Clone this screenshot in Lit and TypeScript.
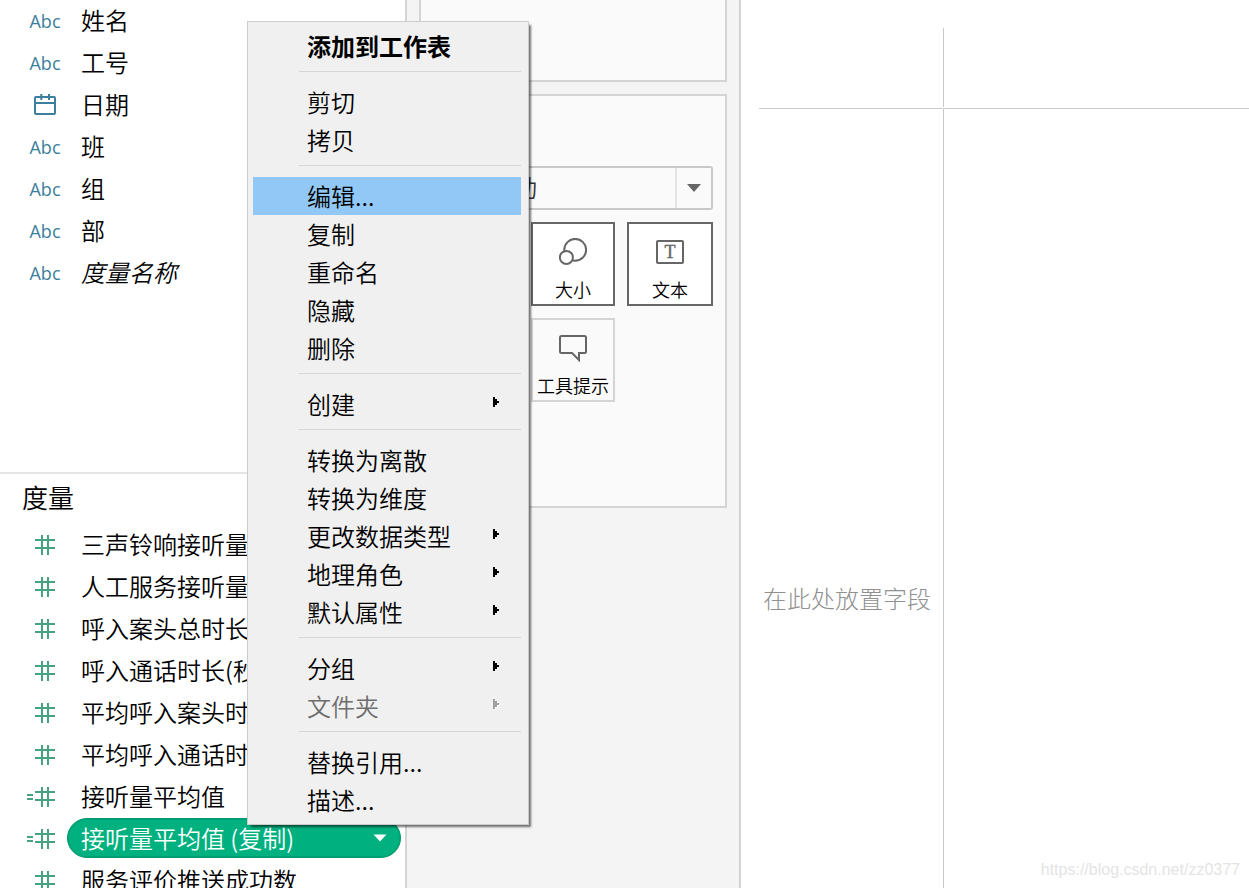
import { LitElement, html, svg, css, nothing } from "lit";
import { customElement, property } from "lit/decorators.js";
import { classMap } from "lit/directives/class-map.js";

type FieldKind = "text" | "date" | "number" | "calculated";

interface Field {
  name: string;
  kind: FieldKind;
  italic?: boolean;
  selected?: boolean;
}

interface MenuEntry {
  label: string;
  bold?: boolean;
  active?: boolean;
  submenu?: boolean;
  disabled?: boolean;
}

const DIMENSIONS: Field[] = [
  { name: "姓名", kind: "text" },
  { name: "工号", kind: "text" },
  { name: "日期", kind: "date" },
  { name: "班", kind: "text" },
  { name: "组", kind: "text" },
  { name: "部", kind: "text" },
  { name: "度量名称", kind: "text", italic: true },
];

const MEASURES: Field[] = [
  { name: "三声铃响接听量", kind: "number" },
  { name: "人工服务接听量", kind: "number" },
  { name: "呼入案头总时长", kind: "number" },
  { name: "呼入通话时长(秒)", kind: "number" },
  { name: "平均呼入案头时长", kind: "number" },
  { name: "平均呼入通话时长", kind: "number" },
  { name: "接听量平均值", kind: "calculated" },
  { name: "接听量平均值 (复制)", kind: "calculated", selected: true },
  { name: "服务评价推送成功数", kind: "number" },
];

const MENU: MenuEntry[][] = [
  [{ label: "添加到工作表", bold: true }],
  [{ label: "剪切" }, { label: "拷贝" }],
  [
    { label: "编辑...", active: true },
    { label: "复制" },
    { label: "重命名" },
    { label: "隐藏" },
    { label: "删除" },
  ],
  [{ label: "创建", submenu: true }],
  [
    { label: "转换为离散" },
    { label: "转换为维度" },
    { label: "更改数据类型", submenu: true },
    { label: "地理角色", submenu: true },
    { label: "默认属性", submenu: true },
  ],
  [
    { label: "分组", submenu: true },
    { label: "文件夹", submenu: true, disabled: true },
  ],
  [{ label: "替换引用..." }, { label: "描述..." }],
];

@customElement("field-row")
class FieldRow extends LitElement {
  @property({ attribute: false }) field!: Field;

  static styles = css`
    :host {
      display: grid;
      grid-template-columns: 42px 1fr;
      height: 42px;
      padding: 0 4px 0 25px;
      box-sizing: border-box;
    }
    .icon {
      display: flex;
      align-items: center;
      justify-content: center;
      padding-right: 2px;
      color: #3b7f9c;
    }
    .abc {
      font: 18px/24px "Open Sans", sans-serif;
    }
    .hash {
      color: #46a27f;
    }
    .name {
      display: flex;
      align-items: center;
      justify-content: space-between;
      box-sizing: border-box;
      height: 40px;
      padding-left: 14px;
      font-size: 24px;
      line-height: 36px;
      white-space: nowrap;
    }
    .italic {
      font-style: italic;
    }
    .selected {
      padding: 0 12px 0 13px;
      border: 1px solid #009a6c;
      border-radius: 20px;
      background: #00b180;
      color: #fff;
      box-shadow: inset 0 0 0 1px #00a375;
    }
    .caret {
      display: flex;
      align-items: center;
      justify-content: center;
      width: 16px;
      height: 24px;
      padding: 0;
      border: 0;
      background: none;
    }
  `;

  private icon() {
    switch (this.field.kind) {
      case "text":
        return html`<span class="icon abc">Abc</span>`;
      case "date":
        return html`<span class="icon">
          <svg width="22" height="22" viewBox="0 0 22 22" fill="none" stroke="currentColor" stroke-width="2" aria-hidden="true">
            <rect x="1" y="3" width="20" height="17" rx="1"></rect>
            <path d="M1 9H21M7.3 0V6M15 0V6"></path>
          </svg>
        </span>`;
      default:
        return html`<span class="icon hash">
          <svg width="36" height="24" viewBox="0 0 36 24" fill="none" stroke="currentColor" stroke-width="2" aria-hidden="true">
            <path d="M8 7H28M8 15H28M15 2V22M21 2V22"></path>
            ${this.field.kind === "calculated"
              ? svg`<path d="M0 10H6M0 14H6"></path>`
              : nothing}
          </svg>
        </span>`;
    }
  }

  render() {
    const { name, italic, selected } = this.field;
    return html`
      ${this.icon()}
      <span class=${classMap({ name: true, italic: !!italic, selected: !!selected })}>
        ${name}
        ${selected
          ? html`<button class="caret" aria-label="字段菜单">
              <svg width="14" height="8" viewBox="0 0 14 8" aria-hidden="true"><path d="M0.5 0.5H13.5L7 7.5Z" fill="#fff"></path></svg>
            </button>`
          : nothing}
      </span>
    `;
  }
}

@customElement("context-menu")
class ContextMenu extends LitElement {
  static styles = css`
    :host {
      display: block;
      box-sizing: border-box;
      width: 282px;
      padding: 5px 7px 5px 5px;
      border: 1px solid #ccc;
      background: #f0f0f0;
      box-shadow: 3px 3px 2px -1px rgba(0, 0, 0, 0.55);
    }
    .line {
      height: 1px;
      margin: 6px 0 11px 46px;
      border: 0;
      background: #d5d5d5;
    }
    .item {
      display: flex;
      align-items: center;
      justify-content: space-between;
      width: 100%;
      height: 38px;
      padding: 0 22px 0 54px;
      border: 0;
      background: none;
      color: #000;
      font: inherit;
      font-size: 24px;
      line-height: 36px;
      text-align: left;
      white-space: nowrap;
    }
    .bold {
      font-weight: 700;
    }
    .active {
      background: #91c8f6;
    }
    .item:disabled {
      color: #6d6d6d;
    }
    .arrow {
      margin-bottom: 4px;
      fill: #000;
    }
    .item:disabled .arrow {
      fill: #a0a0a0;
      filter: drop-shadow(1px 1px 0 #fff);
    }
  `;

  render() {
    return html`<div role="menu">
      ${MENU.map(
        (group, i) => html`
          ${i ? html`<hr class="line" />` : nothing}
          ${group.map(
            (e) => html`<button
              role="menuitem"
              class=${classMap({ item: true, bold: !!e.bold, active: !!e.active })}
              ?disabled=${!!e.disabled}
            >
              ${e.label}
              ${e.submenu
                ? html`<svg class="arrow" width="6" height="10" viewBox="0 0 6 10" aria-hidden="true">
                    <path d="M0 0H2V2H4V4H6V6H4V8H2V10H0Z"></path>
                  </svg>`
                : nothing}
            </button>`
          )}
        `
      )}
    </div>`;
  }
}

@customElement("marks-card")
class MarksCard extends LitElement {
  static styles = css`
    :host {
      display: block;
      padding: 70px 12px 104px;
      border: 2px solid #d4d4d4;
      background: #fafafa;
    }
    .type {
      display: grid;
      grid-template-columns: 1fr 36px;
      height: 40px;
      margin-bottom: 12px;
      border: 2px solid #c8c8c8;
      border-radius: 3px;
    }
    .type select {
      grid-area: 1 / 1 / 2 / 3;
      appearance: none;
      width: 100%;
      padding: 0 36px 3px 54px;
      border: 0;
      background: none;
      color: #333;
      font: inherit;
      font-size: 24px;
    }
    .drop {
      grid-area: 1 / 2;
      display: flex;
      align-items: center;
      justify-content: center;
      border-left: 2px solid #e4e4e4;
      pointer-events: none;
    }
    .grid {
      display: grid;
      grid-template-columns: 1fr 84px 1fr;
      gap: 12px;
    }
    .mark {
      display: flex;
      flex-direction: column;
      align-items: center;
      gap: 10px;
      box-sizing: border-box;
      min-width: 0;
      height: 84px;
      padding: 14px 0 0;
      border: 2px solid #666;
      background: #fff;
      color: #000;
      font: inherit;
      font-size: 18px;
      line-height: 26px;
      white-space: nowrap;
    }
    .second {
      grid-column: 2;
    }
    .quiet {
      border-color: #d4d4d4;
      background: #fafafa;
    }
    .mark svg {
      flex: none;
      fill: none;
      stroke: #666;
      stroke-width: 2;
    }
    .mark .glyph {
      fill: #666;
      stroke: #666;
      stroke-width: 0.4;
      font: 18px "Liberation Serif", serif;
    }
  `;

  render() {
    return html`
      <div class="type">
        <select aria-label="标记类型">
          <option>自动</option>
        </select>
        <span class="drop">
          <svg width="14" height="8" viewBox="0 0 14 8" aria-hidden="true"><path d="M0 0H14L7 8Z" fill="#666"></path></svg>
        </span>
      </div>
      <div class="grid">
        <button class="mark second">
          <svg width="28" height="28" viewBox="0 0 28 28" aria-hidden="true">
            <circle cx="16.2" cy="11.8" r="10.9"></circle>
            <circle cx="7.4" cy="19.4" r="6.5" fill="#fff"></circle>
          </svg>
          大小
        </button>
        <button class="mark">
          <svg width="28" height="28" viewBox="0 0 28 28" aria-hidden="true">
            <rect x="1" y="3" width="26" height="22" rx="1"></rect>
            <text class="glyph" x="14" y="20" text-anchor="middle">T</text>
          </svg>
          文本
        </button>
        <button class="mark second quiet">
          <svg width="28" height="28" viewBox="0 0 28 28" aria-hidden="true">
            <path d="M2.5 2H25.5Q27 2 27 3.5V17.5Q27 19 25.5 19H20V26L13 19H2.5Q1 19 1 17.5V3.5Q1 2 2.5 2Z"></path>
          </svg>
          工具提示
        </button>
      </div>
    `;
  }
}

@customElement("app-root")
class AppRoot extends LitElement {
  static styles = css`
    :host {
      display: grid;
      grid-template-columns: 407px 334px 1fr;
      position: relative;
      height: 100vh;
      overflow: hidden;
      background: #fff;
      color: #000;
      font-family: "Noto Sans CJK SC", sans-serif;
      font-weight: 350;
    }
    .data {
      display: grid;
      grid-template-rows: 472px 1fr;
      min-height: 0;
      border-right: 2px solid #d4d4d4;
      overflow: hidden;
    }
    .measures {
      border-top: 2px solid #e5e5e5;
      min-height: 0;
    }
    .heading {
      margin: 0;
      padding: 0 0 4px 22px;
      font-size: 26px;
      font-weight: inherit;
      line-height: 46px;
    }
    .shelves {
      display: flex;
      flex-direction: column;
      gap: 12px;
      padding: 0 12px;
      border-right: 2px solid #d4d4d4;
      background: #f4f4f4;
    }
    .filters {
      height: 80px;
      border: 2px solid #d4d4d4;
      border-top: 0;
      background: #fafafa;
    }
    .view {
      display: grid;
      grid-template-columns: 183px 1fr;
      grid-template-rows: 79px 1fr;
      gap: 1px;
      padding: 28px 0 0 18px;
      min-height: 0;
    }
    .columns,
    .body {
      border-left: 1px solid #c8c8c8;
    }
    .rows,
    .body {
      border-top: 1px solid #c8c8c8;
    }
    .columns {
      grid-column: 2;
    }
    .rows {
      padding: 471px 4px 0;
      color: #909090;
      font-size: 24px;
      font-weight: 300;
      line-height: 36px;
      white-space: nowrap;
    }
    .menu {
      position: absolute;
      top: 21px;
      left: 247px;
    }
    .watermark {
      position: absolute;
      right: 9px;
      bottom: 8px;
      color: #e4e4e4;
      font: 16px/20px "Liberation Sans", sans-serif;
    }
  `;

  render() {
    return html`
      <section class="data">
        <div>${DIMENSIONS.map((f) => html`<field-row .field=${f}></field-row>`)}</div>
        <div class="measures">
          <h2 class="heading">度量</h2>
          ${MEASURES.map((f) => html`<field-row .field=${f}></field-row>`)}
        </div>
      </section>
      <section class="shelves">
        <div class="filters"></div>
        <marks-card></marks-card>
      </section>
      <main class="view">
        <div class="columns"></div>
        <div class="rows">在此处放置字段</div>
        <div class="body"></div>
      </main>
      <context-menu class="menu"></context-menu>
      <span class="watermark">https://blog.csdn.net/zz0377</span>
    `;
  }
}
